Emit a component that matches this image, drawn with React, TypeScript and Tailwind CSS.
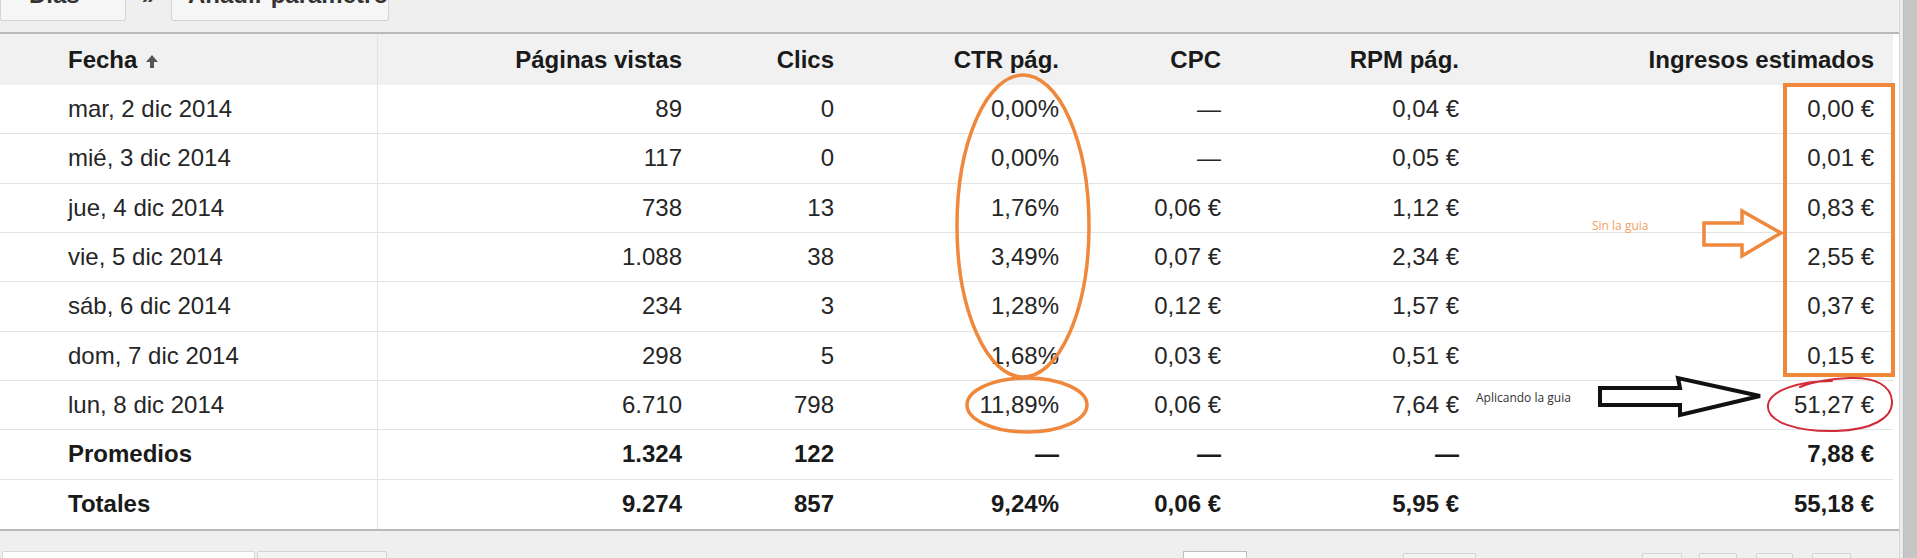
import React from "react";

type Row = { cells: string[]; bold?: boolean };

const rows: Row[] = [
  { cells: ["mar, 2 dic 2014", "89", "0", "0,00%", "—", "0,04 €", "0,00 €"] },
  { cells: ["mié, 3 dic 2014", "117", "0", "0,00%", "—", "0,05 €", "0,01 €"] },
  { cells: ["jue, 4 dic 2014", "738", "13", "1,76%", "0,06 €", "1,12 €", "0,83 €"] },
  { cells: ["vie, 5 dic 2014", "1.088", "38", "3,49%", "0,07 €", "2,34 €", "2,55 €"] },
  { cells: ["sáb, 6 dic 2014", "234", "3", "1,28%", "0,12 €", "1,57 €", "0,37 €"] },
  { cells: ["dom, 7 dic 2014", "298", "5", "1,68%", "0,03 €", "0,51 €", "0,15 €"] },
  { cells: ["lun, 8 dic 2014", "6.710", "798", "11,89%", "0,06 €", "7,64 €", "51,27 €"] },
  { cells: ["Promedios", "1.324", "122", "—", "—", "—", "7,88 €"], bold: true },
  { cells: ["Totales", "9.274", "857", "9,24%", "0,06 €", "5,95 €", "55,18 €"], bold: true },
];

const headers = ["Páginas vistas", "Clics", "CTR pág.", "CPC", "RPM pág.", "Ingresos estimados"];

const grid = "grid grid-cols-[378px_320px_152px_225px_162px_238px_418px] w-[1893px]";

const SortArrow = () => (
  <svg width="14" height="15" viewBox="0 0 14 15" className="ml-[8px] mt-[4px]">
    <path d="M7 1 L13 8 H9 V14 H5 V8 H1 Z" fill="#555" />
  </svg>
);

const Annotations = () => (
  <svg
    width="1917"
    height="558"
    viewBox="0 0 1917 558"
    className="absolute inset-0 pointer-events-none"
    fill="none"
  >
    {/* CTR column */}
    <ellipse cx="1023" cy="226" rx="66" ry="151" stroke="#f0883c" strokeWidth="3.5" />
    <ellipse cx="1027" cy="405" rx="60" ry="27" stroke="#f0883c" strokeWidth="3.5" />
    {/* Ingresos box */}
    <rect x="1785" y="85" width="108" height="290" stroke="#f0883c" strokeWidth="4" />
    <polygon
      points="1704,223 1742,223 1742,211 1781,233 1742,256 1742,245 1704,245"
      stroke="#f0883c"
      strokeWidth="3.5"
    />
    {/* black arrow */}
    <polygon
      points="1600,388 1680,388 1678,378 1760,396 1680,415 1680,405 1600,405"
      stroke="#111"
      strokeWidth="4"
    />
    {/* red scribble */}
    <path
      d="M1832,381 C1800,381 1770,390 1768,405 C1766,423 1800,432 1836,431 C1872,430 1893,418 1892,401 C1891,386 1876,377 1850,378 C1828,379 1812,382 1800,387"
      stroke="#d22c3a"
      strokeWidth="2"
      strokeLinecap="round"
    />
  </svg>
);

export default function App() {
  return (
    <div className="relative w-[1917px] h-[558px] overflow-hidden bg-[#efefef] flex font-['Liberation_Sans',Arial,sans-serif] text-[#222]">
      <div className="w-[1900px] flex flex-col border-r border-[#d6d6d6]">
        {/* toolbar */}
        <div className="h-[34px] shrink-0 flex items-start border-b-2 border-[#b9b9b9] bg-[#efefef]">
          <div className="w-[126px] h-[21px] flex items-end pb-[13px] pl-[28px] bg-[#f6f6f6] border border-t-0 border-[#d4d4d4] rounded-b-[3px] text-[24px] leading-[24px] font-bold text-[#333] overflow-hidden">
            Días
          </div>
          <div className="w-[45px] h-[21px] flex items-end justify-center pb-[13px] text-[24px] leading-[24px] font-bold text-[#444] overflow-hidden">
            »
          </div>
          <div className="w-[218px] h-[21px] flex items-end pb-[13px] pl-[16px] bg-[#f6f6f6] border border-t-0 border-[#d4d4d4] rounded-b-[3px] text-[24px] leading-[24px] font-bold text-[#333] overflow-hidden whitespace-nowrap">
            Añadir parámetro
          </div>
        </div>

        {/* table */}
        <div className="bg-white">
          <div className={`${grid} h-[51px] bg-[#f1f1f1] text-[24px] font-bold text-[#1a1a1a]`}>
            <div className="flex items-center pl-[68px] border-r border-[#e2e2e2]">
              Fecha
              <SortArrow />
            </div>
            {headers.map((h, i) => (
              <div
                key={h}
                className={`flex items-center justify-end whitespace-nowrap ${i === 5 ? "pr-[19px]" : "pr-[16px]"}`}
              >
                {h}
              </div>
            ))}
          </div>
          {rows.map((r, ri) => (
            <div
              key={ri}
              className={`${grid} h-[49.33px] text-[24px] ${ri < rows.length - 1 ? "border-b border-[#e3e3e3]" : ""} ${r.bold ? "font-bold text-[#1a1a1a]" : "text-[#262626]"}`}
            >
              {r.cells.map((c, ci) =>
                ci === 0 ? (
                  <div key={ci} className="flex items-center pl-[68px] border-r border-[#e2e2e2]">
                    {c}
                  </div>
                ) : (
                  <div
                    key={ci}
                    className={`flex items-center justify-end whitespace-nowrap ${ci === 6 ? "pr-[19px]" : "pr-[16px]"}`}
                  >
                    {c}
                  </div>
                )
              )}
            </div>
          ))}
        </div>

        {/* footer */}
        <div className="flex-1 border-t-2 border-[#b9b9b9] bg-[#efefef] flex items-start pt-[20px]">
          <div className="w-[253px] h-[20px] ml-[2px] bg-white border border-b-0 border-[#d8d8d8] rounded-t-[2px]" />
          <div className="w-[130px] h-[20px] ml-[2px] bg-[#f3f3f3] border border-b-0 border-[#d2d2d2] rounded-t-[2px]" />
          <div className="w-[64px] h-[20px] ml-[796px] bg-white border border-b-0 border-[#bdbdbd]" />
          <div className="w-[73px] h-[18px] mt-[2px] ml-[156px] bg-[#f3f3f3] border border-b-0 border-[#d2d2d2] rounded-t-[2px]" />
          <div className="w-[40px] h-[18px] mt-[2px] ml-[166px] bg-[#f3f3f3] border border-b-0 border-[#d2d2d2] rounded-t-[2px]" />
          <div className="w-[38px] h-[18px] mt-[2px] ml-[17px] bg-[#f3f3f3] border border-b-0 border-[#d2d2d2] rounded-t-[2px]" />
          <div className="w-[37px] h-[18px] mt-[2px] ml-[19px] bg-[#f3f3f3] border border-b-0 border-[#d2d2d2] rounded-t-[2px]" />
          <div className="w-[39px] h-[18px] mt-[2px] ml-[19px] bg-[#f3f3f3] border border-b-0 border-[#d2d2d2] rounded-t-[2px]" />
        </div>
      </div>

      {/* scrollbar */}
      <div className="w-[3px] bg-[#ececec]" />
      <div className="flex-1 bg-[#c6c6c6] border-l border-[#bdbdbd]" />

      <Annotations />
      <div className="absolute left-[1592px] top-[218px] text-[12px] leading-[16px] text-[#f0a060] font-['Open_Sans',sans-serif]">
        Sin la guia
      </div>
      <div className="absolute left-[1476px] top-[390px] text-[12px] leading-[16px] text-[#333] font-['Open_Sans',sans-serif]">
        Aplicando la guia
      </div>
    </div>
  );
}
